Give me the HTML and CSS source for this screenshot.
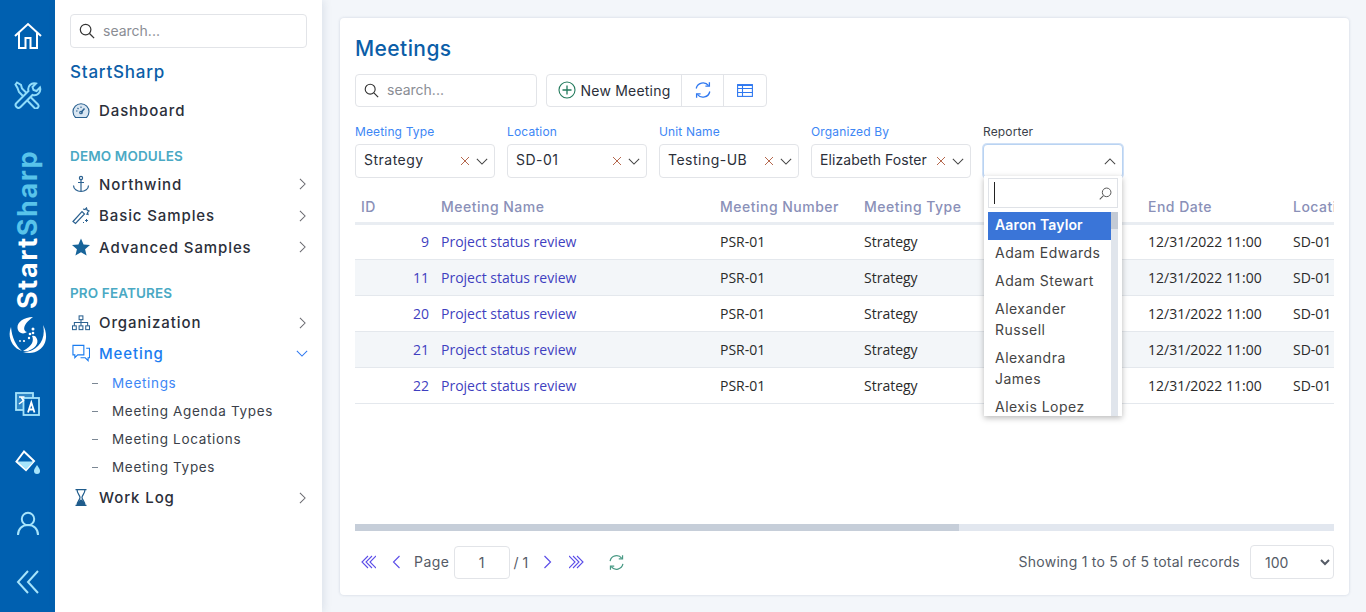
FILE: index.html
```html
<!DOCTYPE html>
<html lang="en">
<head>
  <meta charset="UTF-8">
  <title>Meetings - StartSharp</title>
  <meta name="viewport" content="width=device-width, initial-scale=1.0">
  <link rel="stylesheet" href="styles.css">
</head>
<body>
  <svg class="sprite" xmlns="http://www.w3.org/2000/svg">
    <symbol id="i-right" viewBox="0 0 8 14"><path d="M1 1l6 6-6 6" fill="none" stroke="currentColor" stroke-width="1.2"/></symbol>
    <symbol id="i-down" viewBox="0 0 14 8"><path d="M1 1l6 6 6-6" fill="none" stroke="currentColor" stroke-width="1.2"/></symbol>
    <symbol id="i-x" viewBox="0 0 10 10"><path d="M1 1l8 8M9 1l-8 8" fill="none" stroke="currentColor" stroke-width="1"/></symbol>
    <symbol id="i-search" viewBox="0 0 16 16"><circle cx="6.6" cy="6.6" r="5.3" fill="none" stroke="currentColor" stroke-width="1.2"/><path d="M10.5 10.5l4.6 4.6" fill="none" stroke="currentColor" stroke-width="1.3"/></symbol>
    <symbol id="i-sync" viewBox="0 0 18 18"><path d="M2.2 7.5A7 7 0 0 1 14.6 4.6M15.8 10.5A7 7 0 0 1 3.4 13.4" fill="none" stroke="currentColor" stroke-width="1.3"/><path d="M15.4 1.2v4h-4M2.6 16.8v-4h4" fill="none" stroke="currentColor" stroke-width="1.3"/></symbol>
    <symbol id="i-first" viewBox="0 0 15 14"><path d="M7 1L1 7l6 6M11 1L5 7l6 6M15 1L9 7l6 6" fill="none" stroke="currentColor" stroke-width="1.1"/></symbol>
    <symbol id="i-last" viewBox="0 0 15 14"><path d="M0 1l6 6-6 6M4 1l6 6-6 6M8 1l6 6-6 6" fill="none" stroke="currentColor" stroke-width="1.1"/></symbol>
  </svg>

  <nav class="rail">
    <a class="rail-btn rail-home">
      <svg width="30" height="28" viewBox="0 0 30 28" fill="none" stroke="#fff" stroke-width="2"><path d="M2 14L15 2l13 12M6 11v15h6.500v-10h5v10H24V11"/></svg>
    </a>
    <a class="rail-btn rail-tools">
      <svg width="28" height="28" viewBox="0 0 28 28" fill="none" stroke="#8fdcfa" stroke-width="2"><path d="M3 1.500l4 2.500 1 3.500 16 16a2.500 2.500 0 0 1-3.500 3.500L5 11 3.500 7 1.500 3.500z"/><path d="M26 6.500l-3.500 3.500-3-1-1-3 3.500-3.500a6 6 0 0 0-7.500 7.500L2.500 22a2.800 2.800 0 0 0 4 4L18.500 14A6 6 0 0 0 26 6.500z" fill="#0060b0"/></svg>
    </a>
    <div class="rail-brand"><span class="brand-start">Start</span><span class="brand-sharp">Sharp</span></div>
    <div class="rail-logo">
      <svg width="38" height="38" viewBox="0 0 38 38" fill="#fff">
        <path d="M24 1C15 1 8 6 8.500 12 9 17 14 19 18 16 14 15 13 9 24 1z"/>
        <path d="M2 11C-2 21 3 32 13 35 7 30 3 22 2 11z"/>
        <path d="M34 9C39 18 38 29 30 34 26 37 20 38 14 36 21 36 26 33 29 30 34 25 36 17 34 9z"/>
        <path d="M19 35C25 33 30 28 28 23 27 20 25 19 23 20 25 24 24 30 14 35z"/>
        <circle cx="24" cy="13" r="1.500"/><circle cx="21" cy="18" r="1.300"/><circle cx="24" cy="17" r="1.300"/><circle cx="20" cy="22" r="1.200"/><circle cx="15" cy="25" r="1.100"/><circle cx="11" cy="25" r=".9"/>
      </svg>
    </div>
    <a class="rail-btn rail-lang">
      <svg width="25" height="24" viewBox="0 0 25 24" fill="none" stroke="#a6e4fb" stroke-width="1.800"><rect x="1" y="1" width="17" height="17" fill="#2f86c6"/><rect x="8.500" y="6" width="15.500" height="17" fill="#0060b0"/><path d="M4 5h5.500M6 5l2.500 3.500L4 12" stroke="#fff" stroke-width="1.500"/><path d="M13 20.500l3.300-10 3.200 10M14 17.500h4.500" stroke="#fff" stroke-width="1.800"/></svg>
    </a>
    <a class="rail-btn rail-paint">
      <svg width="26" height="26" viewBox="0 0 26 26"><path d="M9 1.500L1.500 11.500 11 20l8-9z" fill="none" stroke="#fff" stroke-width="2"/><path d="M2.500 11.500h16L11 19.500z" fill="#a6e4fb"/><path d="M22 15c2 3 3 4.500 3 6a3 3 0 0 1-6 0c0-1.500 1-3 3-6z" fill="#a6e4fb"/></svg>
    </a>
    <a class="rail-btn rail-user">
      <svg width="24" height="26" viewBox="0 0 24 26" fill="none" stroke="#a6e4fb" stroke-width="2"><circle cx="12" cy="8" r="6.200"/><path d="M2 24c0-6 4-10 10-10s10 4 10 10"/></svg>
    </a>
    <a class="rail-btn rail-collapse">
      <svg width="24" height="24" viewBox="0 0 24 24" fill="none" stroke="#a6e4fb" stroke-width="2"><path d="M12 1L2 12l10 11M22 1L12 12l10 11"/></svg>
    </a>
  </nav>

  <aside class="sidebar">
    <label class="search-box side-search">
      <svg class="search-icon" width="16" height="16"><use href="#i-search"/></svg>
      <input type="text" placeholder="search...">
    </label>
    <div class="side-title">StartSharp</div>
    <a class="menu-item">
      <svg class="menu-icon" width="18" height="16" viewBox="0 0 18 16" fill="none" stroke="#2b6190" stroke-width="1.100"><path d="M3.500 14.500a8 8 0 1 1 11 0z" fill="#d9e6f2"/><path d="M9 9.500l3.500-4" stroke-width="1.500"/><circle cx="9" cy="9.500" r="1.300"/><path d="M4 8h1.500M9 3.500V5M5.500 5l1 1"/></svg>
      Dashboard
    </a>

    <div class="menu-head first-head">DEMO MODULES</div>
    <a class="menu-item">
      <svg class="menu-icon" width="18" height="18" viewBox="0 0 18 18" fill="none" stroke="#2b6190" stroke-width="1.200"><circle cx="9" cy="3" r="1.600"/><path d="M9 4.600V16.500M6 7.500h6M1.500 10.500c0 3.500 3.500 6 7.500 6s7.500-2.500 7.500-6"/></svg>
      Northwind
      <svg class="menu-arrow" width="7" height="12"><use href="#i-right"/></svg>
    </a>
    <a class="menu-item">
      <svg class="menu-icon" width="18" height="18" viewBox="0 0 18 18" fill="none" stroke="#2b6190" stroke-width="1.200"><path d="M1 14.500L10 4.500l2.500 2.500L3.500 16.500z"/><path d="M11 2l2 .5L14.500 1l.5 2 2 1-1.500 1.500.5 2-2-.5"/><path d="M13 13.500h3M14.500 12v3M11 15.500h1" stroke-width="1"/></svg>
      Basic Samples
      <svg class="menu-arrow" width="7" height="12"><use href="#i-right"/></svg>
    </a>
    <a class="menu-item">
      <svg class="menu-icon" width="18" height="18" viewBox="0 0 19 18"><path d="M9.500 0l2.700 6.300 6.800.6-5.200 4.500 1.600 6.600-5.900-3.500L3.600 18l1.600-6.600L0 6.900l6.800-.6z" fill="#17649a"/></svg>
      Advanced Samples
      <svg class="menu-arrow" width="7" height="12"><use href="#i-right"/></svg>
    </a>

    <div class="menu-head">PRO FEATURES</div>
    <a class="menu-item">
      <svg class="menu-icon" width="18" height="16" viewBox="0 0 19 16" fill="none" stroke="#2b6190" stroke-width="1.100"><rect x="7.500" y=".5" width="4" height="4"/><rect x=".5" y="11" width="4" height="4"/><rect x="7.500" y="11" width="4" height="4"/><rect x="14.500" y="11" width="4" height="4"/><path d="M9.500 4.500V11M2.500 11V7.500h14V11"/></svg>
      Organization
      <svg class="menu-arrow" width="7" height="12"><use href="#i-right"/></svg>
    </a>
    <a class="menu-item menu-open">
      <svg class="menu-icon" width="18" height="18" viewBox="0 0 19 18" fill="none" stroke="#1a7cf0" stroke-width="1.200"><path d="M1 1h11.500v10H6l-3 3v-3H1z"/><path d="M15 4h3.500v10H17v3l-3-3H9"/></svg>
      Meeting
      <svg class="menu-arrow arrow-down" width="12" height="7"><use href="#i-down"/></svg>
    </a>
    <ul class="submenu">
      <li class="sub-active">Meetings</li>
      <li>Meeting Agenda Types</li>
      <li>Meeting Locations</li>
      <li>Meeting Types</li>
    </ul>
    <a class="menu-item">
      <svg class="menu-icon" width="18" height="17" viewBox="0 0 18 17" fill="none" stroke="#1f5c8c" stroke-width="1.200"><path d="M3.500 .6h11M3.500 16.400h11M5 .6c0 4 3 5.500 3 7.900s-3 3.900-3 7.900M13 .6c0 4-3 5.500-3 7.900s3 3.900 3 7.900"/><path d="M5.500 16c0-2.500 2-4 3.500-5 1.500 1 3.500 2.500 3.500 5z" fill="#1f5c8c"/></svg>
      Work Log
      <svg class="menu-arrow" width="7" height="12"><use href="#i-right"/></svg>
    </a>
  </aside>

  <main class="content">
    <section class="card">
      <h1 class="page-title">Meetings</h1>

      <div class="toolbar">
        <label class="search-box grid-search">
          <svg class="search-icon" width="15" height="15"><use href="#i-search"/></svg>
          <input type="text" placeholder="search...">
        </label>
        <div class="btn-group">
          <button class="tool-btn btn-new">
            <svg width="18" height="18" viewBox="0 0 18 18" fill="none" stroke="#227a5c" stroke-width="1.100"><circle cx="9" cy="9" r="8"/><path d="M9 4.500v9M4.500 9h9" stroke-width="1.300"/></svg>
            New Meeting
          </button>
          <button class="tool-btn btn-refresh">
            <svg width="18" height="18" color="#2f78f0"><use href="#i-sync"/></svg>
          </button>
          <button class="tool-btn btn-columns">
            <svg width="16" height="13" viewBox="0 0 16 13" fill="none" stroke="#2f78f0" stroke-width="1.100"><rect x=".6" y=".6" width="14.800" height="11.800"/><path d="M.6 4.500h14.800M.6 8.500h14.800M5.500 .6v11.800M.6 1.500h14.800"/></svg>
          </button>
        </div>
      </div>

      <div class="filters">
        <div class="filter">
          <label class="filter-label">Meeting Type</label>
          <div class="select-box"><span class="select-text">Strategy</span>
            <svg class="clear-x" width="10" height="10"><use href="#i-x"/></svg>
            <svg class="select-arrow" width="12" height="7"><use href="#i-down"/></svg></div>
        </div>
        <div class="filter">
          <label class="filter-label">Location</label>
          <div class="select-box"><span class="select-text">SD-01</span>
            <svg class="clear-x" width="10" height="10"><use href="#i-x"/></svg>
            <svg class="select-arrow" width="12" height="7"><use href="#i-down"/></svg></div>
        </div>
        <div class="filter">
          <label class="filter-label">Unit Name</label>
          <div class="select-box"><span class="select-text">Testing-UB</span>
            <svg class="clear-x" width="10" height="10"><use href="#i-x"/></svg>
            <svg class="select-arrow" width="12" height="7"><use href="#i-down"/></svg></div>
        </div>
        <div class="filter filter-wide">
          <label class="filter-label">Organized By</label>
          <div class="select-box"><span class="select-text">Elizabeth Foster</span>
            <svg class="clear-x" width="10" height="10"><use href="#i-x"/></svg>
            <svg class="select-arrow" width="12" height="7"><use href="#i-down"/></svg></div>
        </div>
        <div class="filter filter-open">
          <label class="filter-label label-plain">Reporter</label>
          <div class="select-box select-focus"><span class="select-text"></span>
            <svg class="select-arrow arrow-up" width="12" height="7"><use href="#i-down"/></svg></div>

          <div class="dropdown">
            <div class="drop-search">
              <span class="caret"></span>
              <svg class="drop-glass" width="13" height="13"><use href="#i-search"/></svg>
            </div>
            <div class="drop-list">
              <ul class="drop-options">
                <li class="opt-active">Aaron Taylor</li>
                <li>Adam Edwards</li>
                <li>Adam Stewart</li>
                <li>Alexander Russell</li>
                <li>Alexandra James</li>
                <li>Alexis Lopez</li>
              </ul>
              <div class="drop-scroll"><div class="drop-thumb"></div></div>
            </div>
          </div>
        </div>
      </div>

      <div class="grid-wrap">
        <table class="grid">
          <colgroup>
            <col class="c-id"><col class="c-name"><col class="c-num"><col class="c-type"><col class="c-date"><col class="c-end"><col class="c-loc">
          </colgroup>
          <thead>
            <tr><th>ID</th><th>Meeting Name</th><th>Meeting Number</th><th>Meeting Type</th><th></th><th>End Date</th><th>Location</th></tr>
          </thead>
          <tbody>
            <tr><td class="cell-id">9</td><td class="cell-link">Project status review</td><td>PSR-01</td><td>Strategy</td><td></td><td>12/31/2022 11:00</td><td>SD-01</td></tr>
            <tr><td class="cell-id">11</td><td class="cell-link">Project status review</td><td>PSR-01</td><td>Strategy</td><td></td><td>12/31/2022 11:00</td><td>SD-01</td></tr>
            <tr><td class="cell-id">20</td><td class="cell-link">Project status review</td><td>PSR-01</td><td>Strategy</td><td></td><td>12/31/2022 11:00</td><td>SD-01</td></tr>
            <tr><td class="cell-id">21</td><td class="cell-link">Project status review</td><td>PSR-01</td><td>Strategy</td><td></td><td>12/31/2022 11:00</td><td>SD-01</td></tr>
            <tr><td class="cell-id">22</td><td class="cell-link">Project status review</td><td>PSR-01</td><td>Strategy</td><td></td><td>12/31/2022 11:00</td><td>SD-01</td></tr>
          </tbody>
        </table>
      </div>

      <div class="hscroll"><div class="hscroll-thumb"></div></div>

      <div class="pager">
        <svg class="pg-first" width="15" height="14"><use href="#i-first"/></svg>
        <svg class="pg-prev" width="9" height="14" viewBox="0 0 8 14"><path d="M7 1L1 7l6 6" fill="none" stroke="currentColor" stroke-width="1.100"/></svg>
        <span class="pg-label">Page</span>
        <input class="pg-input" type="text" value="1">
        <span class="pg-total">/ 1</span>
        <svg class="pg-next" width="9" height="14"><use href="#i-right"/></svg>
        <svg class="pg-last" width="15" height="14"><use href="#i-last"/></svg>
        <svg class="pg-reload" width="17" height="17" color="#4a9a85"><use href="#i-sync"/></svg>
        <span class="pg-info">Showing 1 to 5 of 5 total records</span>
        <select class="pg-size"><option>100</option></select>
      </div>
    </section>
  </main>
</body>
</html>
```

FILE: styles.css
```css
* {
  box-sizing: border-box;
}

html, body {
  height: 100%;
}

body {
  margin: 0;
  display: flex;
  overflow: hidden;
  background: #f3f6fa;
  color: #2b2f3a;
  font-family: Inter, "Noto Sans", sans-serif;
  font-size: 14px;
  letter-spacing: .035em;
}

.sprite {
  display: none;
}

a {
  color: inherit;
  text-decoration: none;
}

ul {
  list-style: none;
  margin: 0;
  padding: 0;
}

/* left blue rail */
.rail {
  flex: 0 0 55px;
  display: flex;
  flex-direction: column;
  align-items: center;
  background: #0060b0;
}

.rail-btn {
  display: flex;
  justify-content: center;
  align-items: center;
  height: 30px;
}

.rail-home { margin-top: 21px; }
.rail-tools { margin-top: 29px; }
.rail-lang { margin-top: 35px; }
.rail-paint { margin-top: 29px; }
.rail-user { margin-top: 31px; }
.rail-collapse { margin-top: 28px; }

.rail-brand {
  margin-top: 41px;
  height: 158px;
  writing-mode: vertical-rl;
  transform: rotate(180deg);
  font-size: 27px;
  font-weight: 700;
  line-height: 30px;
  letter-spacing: 1.600px;
  text-align: left;
}

.brand-start { color: #fff; }
.brand-sharp { color: #58c3ea; }

.rail-logo {
  margin-top: 7px;
  height: 38px;
}

/* sidebar */
.sidebar {
  flex: 0 0 267px;
  min-width: 0;
  padding: 14px 15px;
  background: #fff;
  box-shadow: 2px 0 8px rgba(60, 80, 120, .12);
  z-index: 1;
}

.search-box {
  display: flex;
  align-items: center;
  gap: 8px;
  height: 34px;
  padding: 0 8px;
  border: 1px solid #e2e4e8;
  border-radius: 4px;
  background: #fff;
}

.search-box input {
  flex: 1;
  width: 100%;
  min-width: 0;
  height: 100%;
  border: 0;
  outline: 0;
  padding: 0 0 2px;
  font: inherit;
  letter-spacing: 0;
  background: none;
}

.search-box input::placeholder {
  color: #8a8d94;
}

.search-icon {
  flex: none;
  color: #333;
}

.side-title {
  margin-top: 12px;
  height: 24px;
  line-height: 24px;
  color: #0b5ea8;
  font-size: 17px;
  font-weight: 500;
  letter-spacing: .045em;
}

.menu-item {
  display: flex;
  align-items: center;
  height: 31.5px;
  font-size: 15px;
  font-weight: 500;
  letter-spacing: .06em;
  color: #2b2f3a;
}

.side-title + .menu-item {
  margin-top: 11px;
}

.menu-icon {
  flex: none;
  margin: 0 9px 0 2px;
}

.menu-arrow {
  margin-left: auto;
  margin-right: 1px;
  color: #6a6a70;
}

.arrow-down {
  margin-right: -1px;
  color: #2f78f0;
}

.menu-open {
  margin-top: -1px;
  color: #1a7cf0;
}

.menu-head {
  margin-top: 20px;
  height: 20px;
  line-height: 20px;
  margin-bottom: 4px;
  color: #4aa9c4;
  font-size: 13.500px;
  font-weight: 600;
  letter-spacing: .01em;
}

.first-head {
  margin-top: 19px;
  margin-bottom: 3px;
}

.submenu {
  margin-bottom: 1px;
}

.submenu li {
  position: relative;
  height: 28px;
  line-height: 28px;
  padding-left: 42px;
  color: #3b3f4a;
  font-size: 13.500px;
  letter-spacing: .05em;
}

.submenu li::before {
  content: "";
  position: absolute;
  left: 22px;
  top: 14px;
  width: 6px;
  height: 1px;
  background: #7b8794;
}

.submenu .sub-active {
  color: #3d86f5;
}

/* main card */
.content {
  flex: 1;
  min-width: 0;
  padding: 18px 17px 17px 18px;
}

.card {
  display: flex;
  flex-direction: column;
  height: 100%;
  padding: 15px 15px 0;
  background: #fff;
  border-radius: 4px;
  box-shadow: 0 0 3px rgba(60, 80, 120, .2);
}

.page-title {
  margin: 0;
  height: 32px;
  line-height: 32px;
  color: #0b5ea8;
  font-size: 21px;
  font-weight: 500;
  letter-spacing: .02em;
}

.toolbar {
  display: flex;
  gap: 9px;
  margin-top: 9px;
  height: 33px;
}

.grid-search {
  flex: 0 0 182px;
  height: 33px;
}

.btn-group {
  display: flex;
  border: 1px solid #e2e4e8;
  border-radius: 4px;
}

.tool-btn {
  display: flex;
  align-items: center;
  justify-content: center;
  gap: 5px;
  border: 0;
  border-right: 1px solid #e2e4e8;
  background: none;
  padding: 0 0 1px;
  color: #2b2f3a;
  font: inherit;
  letter-spacing: .015em;
}

.tool-btn:last-child {
  border-right: 0;
}

.btn-new { width: 135px; }
.btn-refresh { width: 42px; }
.btn-columns { width: 42px; }

/* filters */
.filters {
  display: flex;
  gap: 12px;
  margin-top: 17px;
}

.filter {
  position: relative;
  width: 140px;
}

.filter-wide {
  width: 160px;
}

.filter-label {
  display: block;
  height: 20px;
  line-height: 16px;
  color: #3d86f5;
  font-size: 12px;
  letter-spacing: .012em;
}

.label-plain {
  color: #3b3f4a;
}

.select-box {
  display: flex;
  align-items: center;
  height: 34px;
  padding: 0 6px 0 8px;
  border: 1px solid #e2e4e8;
  border-radius: 4px;
  background: #fff;
}

.select-text {
  flex: 1;
  min-width: 0;
  padding-bottom: 3px;
  white-space: nowrap;
}

.filter-wide .select-text {
  letter-spacing: .005em;
}

.clear-x {
  flex: none;
  color: #b5684e;
  margin-right: 6px;
}

.select-arrow {
  flex: none;
  color: #444;
}

.arrow-up {
  transform: rotate(180deg);
}

.select-focus {
  border-color: #b9d3f2;
  box-shadow: 0 0 0 1px #cfe0f6;
}

.dropdown {
  position: absolute;
  top: 52px;
  left: 1px;
  width: 138px;
  height: 240px;
  padding: 2px 4px 0;
  background: #fff;
  box-shadow: 0 2px 6px rgba(0, 0, 0, .28);
  z-index: 5;
}

.drop-search {
  display: flex;
  align-items: center;
  justify-content: space-between;
  height: 30px;
  padding: 0 5px;
  border: 1px solid #dfe2e7;
}

.caret {
  width: 1px;
  height: 22px;
  background: #222;
}

.drop-glass {
  color: #555;
  transform: scaleX(-1);
}

.drop-list {
  display: flex;
  height: 204px;
  margin-top: 4px;
  overflow: hidden;
}

.drop-options {
  flex: 1;
  min-width: 0;
  color: #444;
}

.drop-options li {
  padding: 2px 7px 5px;
  line-height: 21px;
}

.drop-options .opt-active {
  background: #3a75d8;
  color: #fff;
  font-weight: 600;
  letter-spacing: .01em;
}

.drop-scroll {
  flex: 0 0 7px;
  background: #e0e5ec;
}

.drop-thumb {
  height: 17px;
  background: #c3cad5;
}

/* table */
.grid-wrap {
  flex: 1;
  min-height: 0;
  margin-top: 12px;
  overflow: hidden;
}

.grid {
  width: 1052px;
  table-layout: fixed;
  border-collapse: collapse;
  font-family: "Open Sans", sans-serif;
  letter-spacing: 0;
}

.c-id { width: 80px; }
.c-name { width: 279px; }
.c-num { width: 144px; }
.c-type { width: 140px; }
.c-date { width: 144px; }
.c-end { width: 145px; }
.c-loc { width: 120px; }

.grid th {
  height: 33px;
  padding: 1px 6px 0;
  border-bottom: 3px solid #e9edf2;
  color: #8a90b8;
  font-family: Inter, sans-serif;
  font-size: 14px;
  font-weight: 500;
  letter-spacing: .035em;
  text-align: left;
  white-space: nowrap;
}

.grid td {
  height: 36px;
  padding: 0 6px;
  border-bottom: 1px solid #e4e8ed;
  color: #2a2a2a;
  white-space: nowrap;
}

.grid tbody tr:nth-child(even) td {
  background: #f3f6f9;
}

.grid .cell-id {
  text-align: right;
  color: #3f3fc0;
}

.grid .cell-link {
  color: #3f3fc0;
}

.hscroll {
  flex: none;
  height: 7px;
  background: #e2e7ef;
}

.hscroll-thumb {
  width: 604px;
  height: 100%;
  background: #c6ced9;
}

/* pager */
.pager {
  flex: none;
  display: flex;
  align-items: center;
  height: 64px;
  padding-bottom: 2px;
  color: #555b66;
}

.pg-first { margin-left: 6px; color: #5b4de8; }
.pg-prev { margin-left: 16px; color: #5b4de8; }
.pg-next { margin-left: 15px; color: #5b4de8; }
.pg-last { margin-left: 17px; color: #5b4de8; }
.pg-reload { margin-left: 24px; }

.pg-label {
  margin-left: 13px;
  padding-bottom: 1px;
}

.pg-input {
  width: 56px;
  height: 33px;
  margin-left: 4px;
  border: 1px solid #e2e4e8;
  border-radius: 4px;
  outline: 0;
  padding: 0;
  text-align: center;
  color: #555b66;
  font: inherit;
}

.pg-total {
  margin-left: 4px;
  letter-spacing: 0;
}

.pg-info {
  margin-left: auto;
  padding-bottom: 1px;
  letter-spacing: .25px;
}

.pg-size {
  width: 84px;
  height: 34px;
  margin-left: 10px;
  padding-left: 10px;
  border: 1px solid #e2e4e8;
  border-radius: 4px;
  background: #fff;
  color: #555b66;
  font: inherit;
}
```
